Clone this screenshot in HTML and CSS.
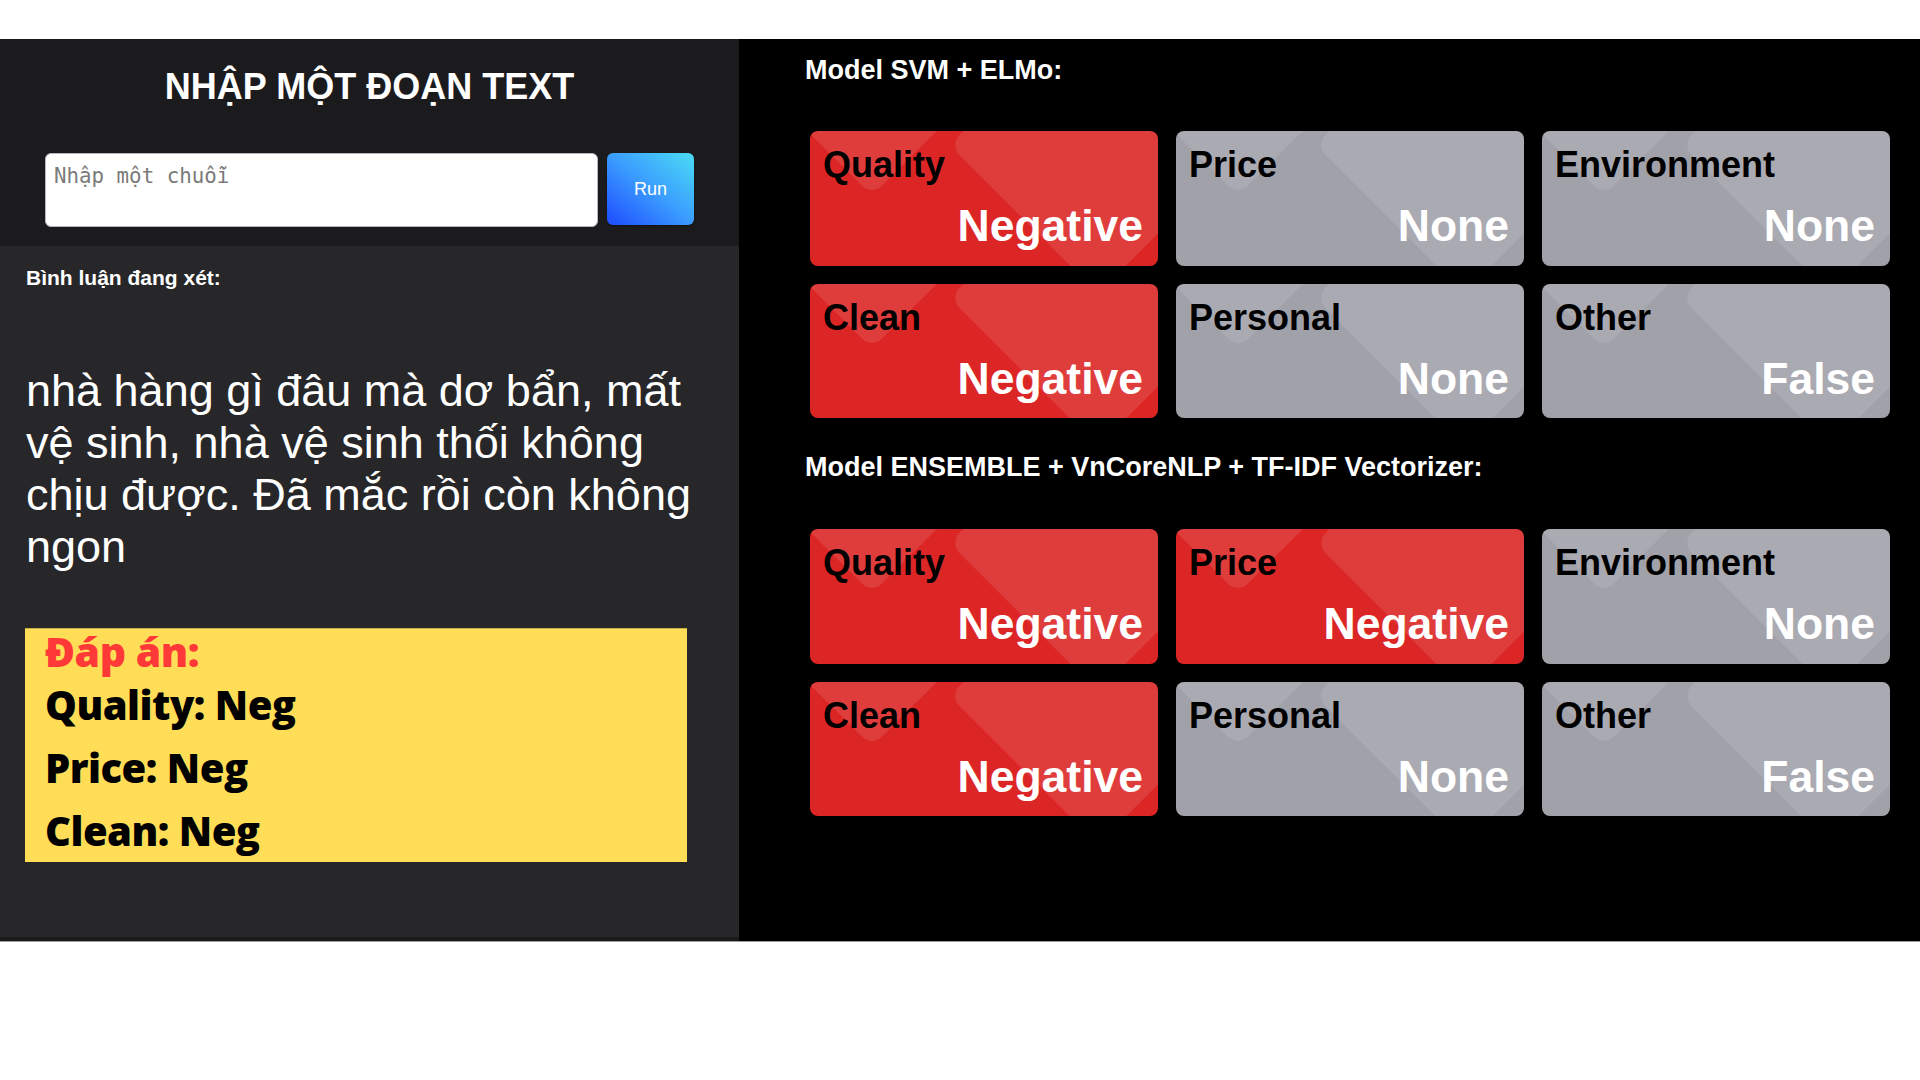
FILE: index.html
```html
<!DOCTYPE html>
<html lang="vi">
<head>
<meta charset="utf-8">
<title>Aspect sentiment demo</title>
<link rel="stylesheet" href="styles.css">
</head>
<body>
<div class="topbar"></div>
<main class="app">
  <section class="left">
    <div class="input-head">
      <h1 class="title">NHẬP MỘT ĐOẠN TEXT</h1>
      <div class="input-row">
        <textarea class="input" placeholder="Nhập một chuỗi"></textarea>
        <button class="run">Run</button>
      </div>
    </div>
    <div class="comment">
      <h4 class="comment-label">Bình luận đang xét:</h4>
      <p class="comment-text">nhà hàng gì đâu mà dơ bẩn, mất vệ sinh, nhà vệ sinh thối không chịu được. Đã mắc rồi còn không ngon</p>
      <div class="answer">
        <div class="answer-title">Đáp án:</div>
        <div class="answer-line">Quality: Neg</div>
        <div class="answer-line">Price: Neg</div>
        <div class="answer-line">Clean: Neg</div>
      </div>
    </div>
  </section>
  <section class="right">
    <h3 class="model-title">Model SVM + ELMo:</h3>
    <div class="grid">
      <div class="card neg"><div class="card-label">Quality</div><div class="card-value">Negative</div></div>
      <div class="card none"><div class="card-label">Price</div><div class="card-value">None</div></div>
      <div class="card none"><div class="card-label">Environment</div><div class="card-value">None</div></div>
      <div class="card neg"><div class="card-label">Clean</div><div class="card-value">Negative</div></div>
      <div class="card none"><div class="card-label">Personal</div><div class="card-value">None</div></div>
      <div class="card none"><div class="card-label">Other</div><div class="card-value">False</div></div>
    </div>
    <h3 class="model-title second">Model ENSEMBLE + VnCoreNLP + TF-IDF Vectorizer:</h3>
    <div class="grid">
      <div class="card neg"><div class="card-label">Quality</div><div class="card-value">Negative</div></div>
      <div class="card neg"><div class="card-label">Price</div><div class="card-value">Negative</div></div>
      <div class="card none"><div class="card-label">Environment</div><div class="card-value">None</div></div>
      <div class="card neg"><div class="card-label">Clean</div><div class="card-value">Negative</div></div>
      <div class="card none"><div class="card-label">Personal</div><div class="card-value">None</div></div>
      <div class="card none"><div class="card-label">Other</div><div class="card-value">False</div></div>
    </div>
  </section>
</main>
</body>
</html>
```
FILE: styles.css
```css
* { box-sizing: border-box; }

html, body {
  margin: 0;
  padding: 0;
  background: #ffffff;
  font-family: "Liberation Sans", Arial, sans-serif;
}

.topbar {
  height: 39px;
  background: #ffffff;
}

.app {
  display: flex;
  height: 903px;
  border-bottom: 1px solid #9c9c9c;
}

/* ---------- left column ---------- */
.left {
  width: 739px;
  flex: none;
  display: flex;
  flex-direction: column;
  background: #27272a;
  border-bottom: 4px solid #1b1b1e;
}

.input-head {
  background: #1b1b1e;
  padding: 27px 45px 19px;
}

.title {
  margin: 0 0 45px;
  color: #ffffff;
  font-size: 36px;
  font-weight: 700;
  line-height: normal;
  text-align: center;
}

.input-row {
  display: flex;
  align-items: flex-start;
  gap: 9px;
}

.input {
  flex: 1;
  height: 74px;
  margin: 0;
  padding: 10px 8px;
  border: 1px solid #b4b8be;
  border-radius: 6px;
  background: #ffffff;
  font-family: "DejaVu Sans Mono", monospace;
  font-size: 20.8px;
  color: #222;
  resize: none;
  outline: none;
}

.input::placeholder {
  color: #7a7a7a;
}

.run {
  width: 87px;
  height: 72px;
  border: none;
  border-radius: 6px;
  background: linear-gradient(to top right, #1e4bff 0%, #3a9cff 50%, #4bdcf4 100%);
  color: #ffffff;
  font-family: "Liberation Sans", Arial, sans-serif;
  font-size: 18px;
  box-shadow: 0 1px 2px rgba(0, 0, 0, 0.4);
}

.comment {
  flex: 1;
  padding: 20px 26px 0;
  color: #ffffff;
}

.comment-label {
  margin: 0;
  font-size: 21px;
  font-weight: 700;
  line-height: normal;
}

.comment-text {
  margin: 75px 0 0;
  font-size: 45px;
  font-weight: 400;
  line-height: normal;
}

.answer {
  margin: 55px 0 0 -1px;
  width: 662px;
  height: 234px;
  padding: 0 0 0 20px;
  background: #ffdd57;
  border-top: 1px solid #c9b04c;
  font-family: "Open Sans", "Lato", sans-serif;
  font-weight: 800;
  letter-spacing: -0.5px;
}

.answer-title {
  color: #ff3838;
  font-size: 41px;
  line-height: 44px;
}

.answer-line {
  color: #000000;
  font-size: 40px;
  line-height: 63px;
}

/* ---------- right column ---------- */
.right {
  flex: 1;
  background: #000000;
  padding: 16px 30px 0 66px;
}

.model-title {
  margin: 0 0 45px;
  color: #ffffff;
  font-size: 27px;
  font-weight: 700;
  line-height: normal;
}

.model-title.second {
  margin-top: 34px;
  margin-bottom: 46px;
}

.grid {
  display: grid;
  grid-template-columns: repeat(3, 348px);
  gap: 18px;
  margin-left: 5px;
}

.card {
  position: relative;
  overflow: hidden;
  height: 134.5px;
  padding: 13px 15px 14.5px 13px;
  border-radius: 8px;
  display: flex;
  flex-direction: column;
  justify-content: space-between;
}

.card::before,
.card::after {
  content: "";
  position: absolute;
  background: rgba(255, 255, 255, 0.1);
  transform: rotate(45deg);
  border-radius: 14px;
}

.card::before {
  width: 134px;
  height: 134px;
  left: -5px;
  top: -97px;
}

.card::after {
  width: 210px;
  height: 210px;
  left: 183px;
  top: -91px;
}

.card.neg { background: #dc2626; }
.card.none { background: #a1a1aa; }

.card-label,
.card-value {
  position: relative;
  z-index: 1;
  font-weight: 700;
  line-height: normal;
}

.card-label {
  color: #000000;
  font-size: 36px;
}

.card-value {
  color: #ffffff;
  font-size: 44.5px;
  text-align: right;
}
```
